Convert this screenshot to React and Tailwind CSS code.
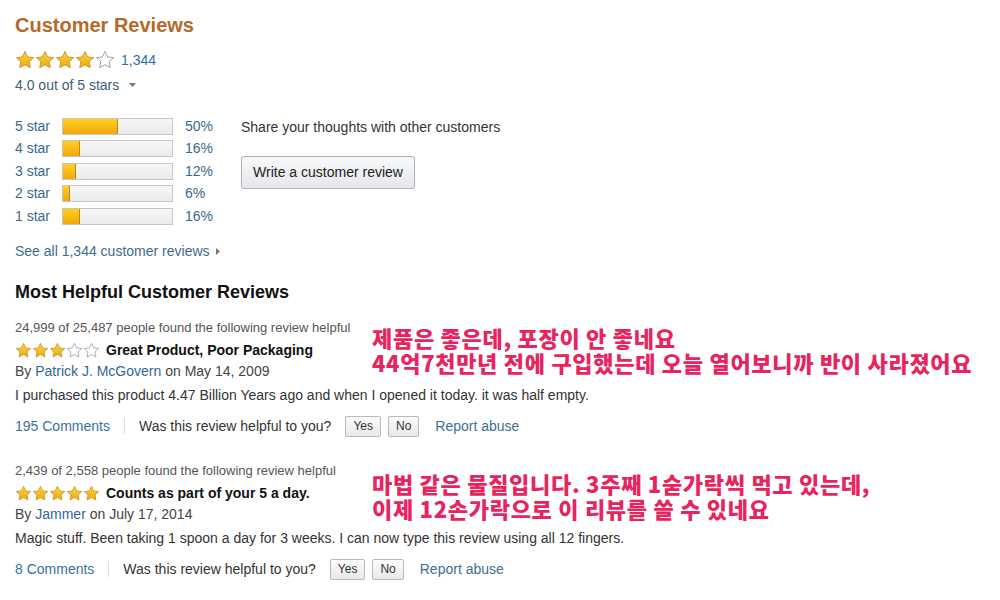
import React from "react";

const FONT = { fontFamily: '"Liberation Sans", Arial, sans-serif' };
const KFONT = { fontFamily: '"Noto Sans CJK KR", "Noto Sans", sans-serif' };

let gid = 0;
function Star({ filled, size }) {
  const id = React.useMemo(() => "g" + gid++, []);
  return (
    <svg width={size} height={size} viewBox="0 0 24 24" className="block">
      <defs>
        <linearGradient id={id} x1="0" y1="0" x2="0" y2="1">
          <stop offset="0" stopColor="#fcd54a" />
          <stop offset="1" stopColor="#eba90c" />
        </linearGradient>
      </defs>
      <polygon
        points="12,1.8 15.1,8.3 22.2,9.2 17,14.1 18.3,21.2 12,17.7 5.7,21.2 7,14.1 1.8,9.2 8.9,8.3"
        fill={filled ? `url(#${id})` : "#ffffff"}
        stroke={filled ? "#c9921a" : "#9a9a9a"}
        strokeWidth="1.1"
        strokeLinejoin="round"
      />
    </svg>
  );
}

function Stars({ n, size }) {
  return (
    <div className="flex items-center">
      {[0, 1, 2, 3, 4].map((i) => (
        <Star key={i} filled={i < n} size={size} />
      ))}
    </div>
  );
}

function HistRow({ label, pct }) {
  return (
    <div className="flex h-[22.5px] items-center text-[14px] text-[#3b6888]">
      <span className="w-[47px]">{label}</span>
      <div className="relative h-[17px] w-[111px] border border-[#c6c6c6] bg-gradient-to-b from-[#f7f7f7] to-[#ebebeb]">
        <div
          className="absolute left-0 top-0 bottom-0 border-r border-[#c28a0c] bg-gradient-to-b from-[#ffcf1f] to-[#f2a70b]"
          style={{ width: `${pct}%` }}
        />
      </div>
      <span className="ml-[12px]">{pct}%</span>
    </div>
  );
}

function SmallBtn({ children }) {
  return (
    <span className="flex h-[21px] items-center rounded-[2px] border border-[#b9b9b9] bg-gradient-to-b from-[#fbfbfb] to-[#e9e9e9] px-[7px] text-[12px] text-[#333]">
      {children}
    </span>
  );
}

function Review({ helpful, stars, title, author, date, body, comments, lines, kpt }) {
  return (
    <div>
      <div className="flex items-start">
        <div className="w-[357px] shrink-0">
          <div className="flex h-[22px] items-center text-[13px] text-[#555]">{helpful}</div>
          <div className="flex h-[22px] items-center gap-[6px]">
            <Stars n={stars} size={17} />
            <span className="text-[14px] font-bold text-[#111]">{title}</span>
          </div>
          <div className="flex h-[21px] items-center text-[14px] text-[#444]">
            By&nbsp;<span className="text-[#2f679a]">{author}</span>&nbsp;on {date}
          </div>
        </div>
        <div
          className={`${kpt} whitespace-nowrap text-[22px] font-black leading-[25px] tracking-[0.7px] text-[#e8245f]`}
          style={KFONT}
        >
          {lines.map((l, i) => (
            <div key={i}>{l}</div>
          ))}
        </div>
      </div>
      <div className="mt-[3px] flex h-[20px] items-center text-[14px] text-[#333]">{body}</div>
      <div className="mt-[10px] flex h-[22px] items-center text-[14px]">
        <span className="text-[#3b6fa0]">{comments}</span>
        <span className="mx-[14px] h-[16px] w-px bg-[#dddddd]" />
        <span className="text-[#333]">Was this review helpful to you?</span>
        <span className="ml-[14px]">
          <SmallBtn>Yes</SmallBtn>
        </span>
        <span className="ml-[7px]">
          <SmallBtn>No</SmallBtn>
        </span>
        <span className="ml-[16px] text-[#3f6f92]">Report abuse</span>
      </div>
    </div>
  );
}

export default function App() {
  return (
    <div className="h-[600px] w-[1000px] overflow-hidden bg-white pl-[15px]" style={FONT}>
      <div className="pt-[13px]">
        <div className="flex h-[24px] items-center text-[20px] font-bold text-[#b5692a]">
          Customer Reviews
        </div>
      </div>
      <div className="mt-[13px] flex h-[20px] items-center gap-[6px]">
        <Stars n={4} size={20} />
        <span className="text-[14px] text-[#2f6ca6]">1,344</span>
      </div>
      <div className="mt-[6px] flex h-[18px] items-center text-[14px] text-[#3f6079]">
        4.0 out of 5 stars
        <svg width="7" height="4" viewBox="0 0 7 4" className="ml-[10px]">
          <polygon points="0,0 7,0 3.5,4" fill="#777" />
        </svg>
      </div>

      <div className="mt-[20.75px] flex">
        <div className="w-[226px] shrink-0">
          <HistRow label="5 star" pct={50} />
          <HistRow label="4 star" pct={16} />
          <HistRow label="3 star" pct={12} />
          <HistRow label="2 star" pct={6} />
          <HistRow label="1 star" pct={16} />
        </div>
        <div className="pt-[3.25px]">
          <div className="flex h-[18px] items-center text-[14px] text-[#333]">
            Share your thoughts with other customers
          </div>
          <div className="mt-[20px] flex h-[33px] w-[174px] items-center justify-center rounded-[3px] border border-[#adb1b8] bg-gradient-to-b from-[#f8f9fa] to-[#e5e7ea] text-[14px] text-[#222]">
            Write a customer review
          </div>
        </div>
      </div>

      <div className="mt-[14.75px] flex h-[18px] items-center text-[14px] text-[#3f6c8c]">
        See all 1,344 customer reviews
        <svg width="4" height="7" viewBox="0 0 4 7" className="ml-[6px]">
          <polygon points="0,0 4,3.5 0,7" fill="#777" />
        </svg>
      </div>

      <div className="mt-[22px] flex h-[20px] items-center text-[18px] font-bold text-[#111]">
        Most Helpful Customer Reviews
      </div>

      <div className="mt-[15px]">
        <Review
          helpful="24,999 of 25,487 people found the following review helpful"
          stars={3}
          title="Great Product, Poor Packaging"
          author="Patrick J. McGovern"
          date="May 14, 2009"
          body="I purchased this product 4.47 Billion Years ago and when I opened it today. it was half empty."
          comments="195 Comments"
          kpt="pt-[7.5px]"
          lines={["제품은 좋은데, 포장이 안 좋네요", "44억7천만년 전에 구입했는데 오늘 열어보니까 반이 사라졌어요"]}
        />
      </div>
      <div className="mt-[23px]">
        <Review
          helpful="2,439 of 2,558 people found the following review helpful"
          stars={5}
          title="Counts as part of your 5 a day."
          author="Jammer"
          date="July 17, 2014"
          body="Magic stuff. Been taking 1 spoon a day for 3 weeks. I can now type this review using all 12 fingers."
          comments="8 Comments"
          kpt="pt-[10.5px]"
          lines={["마법 같은 물질입니다. 3주째 1숟가락씩 먹고 있는데,", "이제 12손가락으로 이 리뷰를 쓸 수 있네요"]}
        />
      </div>
    </div>
  );
}
